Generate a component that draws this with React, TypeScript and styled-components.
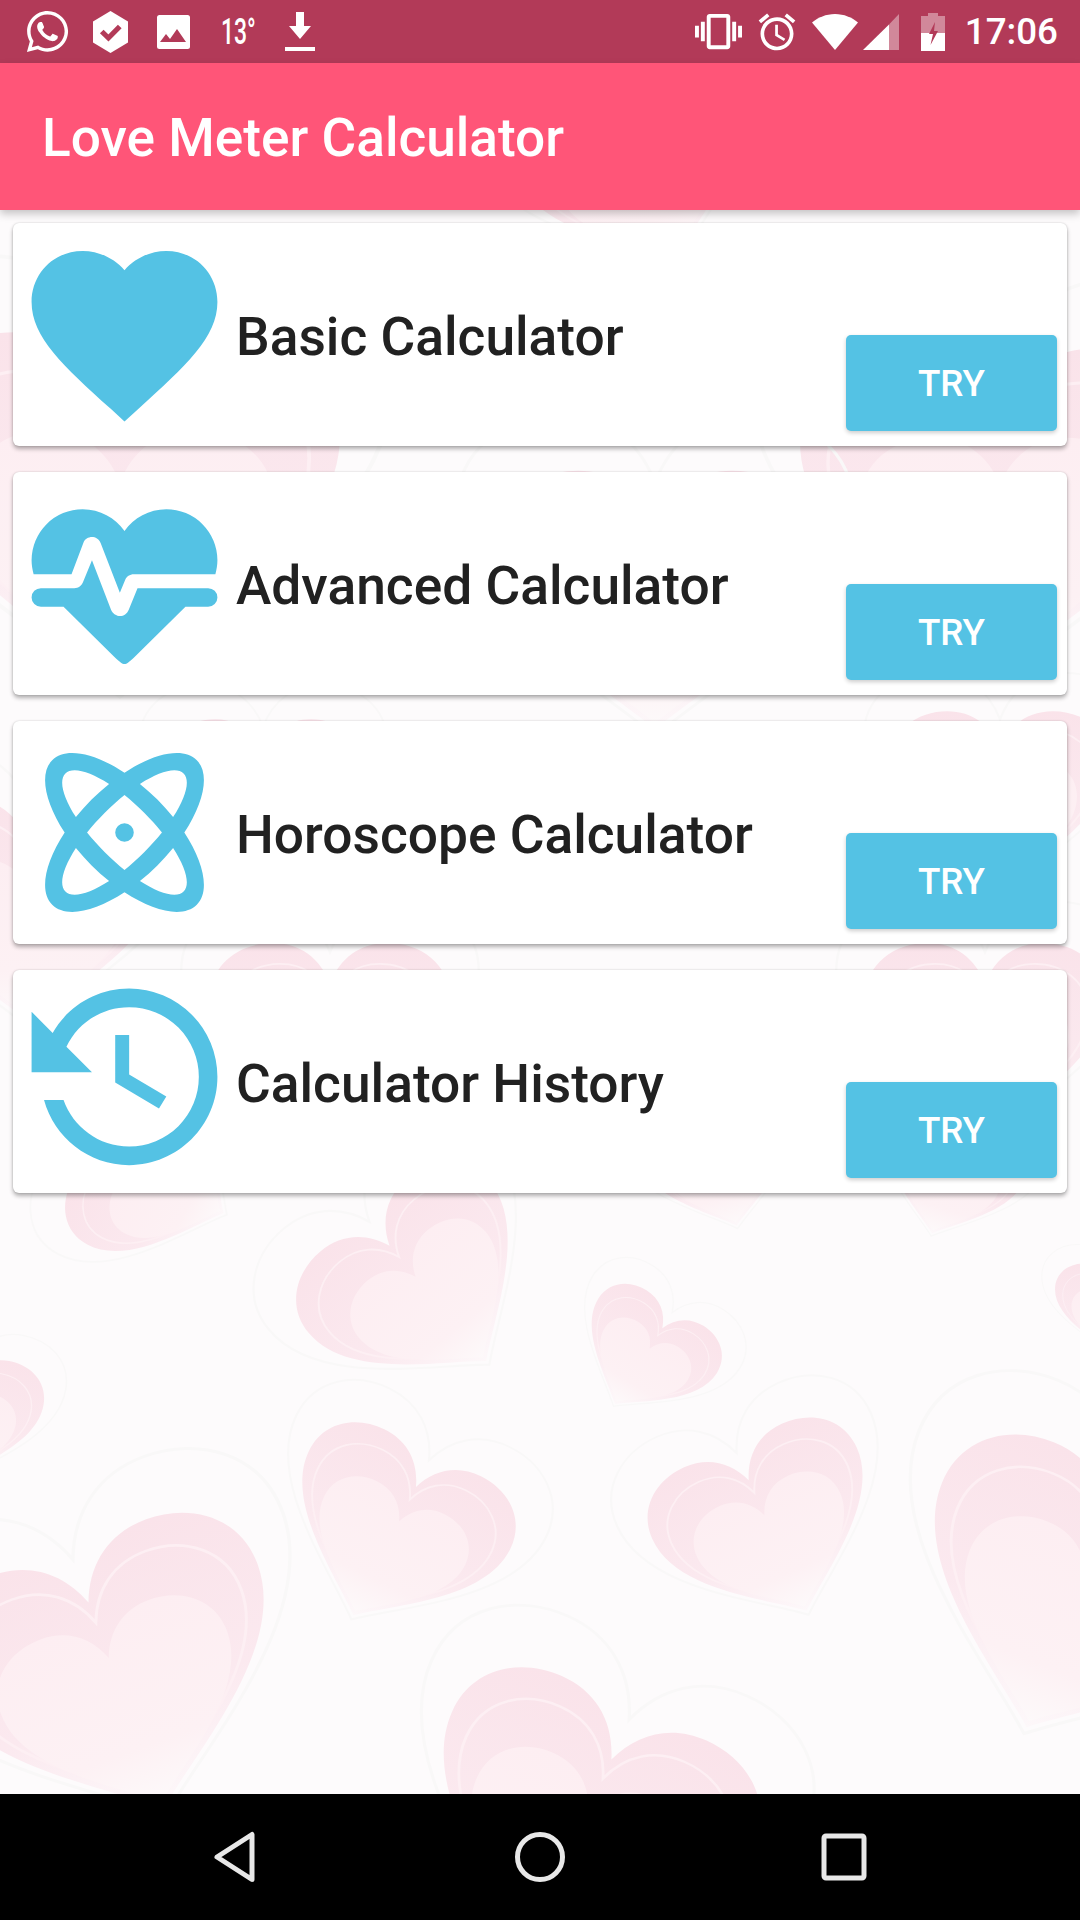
import React from 'react';
import styled, { createGlobalStyle } from 'styled-components';
import { FaWhatsapp } from 'react-icons/fa';

const GlobalStyle = createGlobalStyle`
  html, body {
    margin: 0;
    padding: 0;
    background: #000;
  }
  * {
    box-sizing: border-box;
  }
  body {
    font-family: Roboto, "Noto Sans", sans-serif;
  }
`;

const BLUE = '#54c2e4';

const HEART =
  'M0 95C-30 65-100 20-100-40C-100-75-75-95-48-95C-25-95-8-80 0-55C8-80 25-95 48-95C75-95 100-75 100-40C100 20 30 65 0 95Z';

// x, y = centre of the heart on the page body, s = scale, r = rotation in degrees
const hearts = [
  { x: 120, y: 300, s: 2.2, r: 0 },
  { x: 1000, y: 300, s: 2.0, r: 0 },
  { x: 640, y: -40, s: 1.2, r: -20 },
  { x: 655, y: 390, s: 1.6, r: 0 },
  { x: 263, y: 590, s: 1.0, r: 0 },
  { x: 1000, y: 590, s: 1.1, r: 0 },
  { x: 30, y: 700, s: 1.4, r: 0 },
  { x: 330, y: 830, s: 1.2, r: 0 },
  { x: 985, y: 830, s: 1.2, r: 0 },
  { x: 158, y: 968, s: 0.92, r: -62 },
  { x: 950, y: 968, s: 0.72, r: 18 },
  { x: 720, y: 953, s: 0.8, r: -15 },
  { x: 425, y: 1078, s: 1.18, r: -40 },
  { x: 645, y: 1146, s: 0.7, r: 32 },
  { x: 393, y: 1324, s: 1.12, r: 26 },
  { x: 770, y: 1318, s: 1.12, r: -24 },
  { x: 116, y: 1468, s: 1.72, r: -20 },
  { x: 580, y: 1620, s: 1.65, r: 24 },
  { x: 1078, y: 1390, s: 1.7, r: 22 },
  { x: -40, y: 1208, s: 0.8, r: 10 },
  { x: 1110, y: 1098, s: 0.55, r: 0 }
];

const menu = [
  {
    title: 'Basic Calculator',
    icon: 'M12 21.35l-1.45-1.32C5.4 15.36 2 12.28 2 8.5 2 5.42 4.42 3 7.5 3c1.74 0 3.41.81 4.5 2.09C13.09 3.81 14.76 3 16.5 3 19.58 3 22 5.42 22 8.5c0 3.78-3.4 6.86-8.55 11.54L12 21.35z'
  },
  {
    title: 'Advanced Calculator',
    icon: 'M7.5,4A5.5,5.5 0 0,0 2,9.5C2,10 2.09,10.5 2.22,11H6.3L7.57,7.63C7.87,6.83 9.05,6.75 9.43,7.63L11.5,13L12.09,11.58C12.22,11.25 12.57,11 13,11H21.78C21.91,10.5 22,10 22,9.5A5.5,5.5 0 0,0 16.5,4C14.64,4 13,4.93 12,6.34C11,4.93 9.36,4 7.5,4V4M3,12.5A1,1 0 0,0 2,13.5A1,1 0 0,0 3,14.5H5.44L11,20C12,20.9 12,20.9 13,20L18.56,14.5H21A1,1 0 0,0 22,13.5A1,1 0 0,0 21,12.5H13.4L12.47,14.8C12.07,15.81 10.92,15.67 10.55,14.83L8.5,9.5L7.54,11.83C7.39,12.21 7.05,12.5 6.6,12.5H3Z'
  },
  {
    title: 'Horoscope Calculator',
    icon: 'M12,11A1,1 0 0,1 13,12A1,1 0 0,1 12,13A1,1 0 0,1 11,12A1,1 0 0,1 12,11M4.22,4.22C5.65,2.79 8.75,3.43 12,5.56C15.25,3.43 18.35,2.79 19.78,4.22C21.21,5.65 20.57,8.75 18.44,12C20.57,15.25 21.21,18.35 19.78,19.78C18.35,21.21 15.25,20.57 12,18.44C8.75,20.57 5.65,21.21 4.22,19.78C2.79,18.35 3.43,15.25 5.56,12C3.43,8.75 2.79,5.65 4.22,4.22M15.54,8.46C16.15,9.08 16.71,9.71 17.23,10.34C18.61,8.21 19.11,6.38 18.36,5.64C17.62,4.89 15.79,5.39 13.66,6.77C14.29,7.29 14.92,7.85 15.54,8.46M8.46,15.54C7.85,14.92 7.29,14.29 6.77,13.66C5.39,15.79 4.89,17.62 5.64,18.36C6.38,19.11 8.21,18.61 10.34,17.23C9.71,16.71 9.08,16.15 8.46,15.54M5.64,5.64C4.89,6.38 5.39,8.21 6.77,10.34C7.29,9.71 7.85,9.08 8.46,8.46C9.08,7.85 9.71,7.29 10.34,6.77C8.21,5.39 6.38,4.89 5.64,5.64M9.88,14.12C10.58,14.82 11.3,15.46 12,16.03C12.7,15.46 13.42,14.82 14.12,14.12C14.82,13.42 15.46,12.7 16.03,12C15.46,11.3 14.82,10.58 14.12,9.88C13.42,9.18 12.7,8.54 12,7.97C11.3,8.54 10.58,9.18 9.88,9.88C9.18,10.58 8.54,11.3 7.97,12C8.54,12.7 9.18,13.42 9.88,14.12M18.36,18.36C19.11,17.62 18.61,15.79 17.23,13.66C16.71,14.29 16.15,14.92 15.54,15.54C14.92,16.15 14.29,16.71 13.66,17.23C15.79,18.61 17.62,19.11 18.36,18.36Z'
  },
  {
    title: 'Calculator History',
    icon: 'M11,7V12.11L15.71,14.9L16.5,13.62L12.5,11.25V7M12.5,2C8.97,2 5.91,3.92 4.27,6.77L2,4.5V11H8.5L5.75,8.25C6.96,5.73 9.5,4 12.5,4A7.5,7.5 0 0,1 20,11.5A7.5,7.5 0 0,1 12.5,19C9.23,19 6.47,16.91 5.44,14H3.34C4.44,18.03 8.11,21 12.5,21C17.74,21 22,16.75 22,11.5A9.5,9.5 0 0,0 12.5,2Z'
  }
];

const HeartsBackdrop = () => (
  <Backdrop viewBox="0 0 1080 1584">
    <defs>
      <linearGradient id="rim" x1="0" y1="0" x2="0" y2="1">
        <stop offset="0" stopColor="#fae3ea" />
        <stop offset="0.6" stopColor="#fbe9ef" />
        <stop offset="1" stopColor="#fdf8fa" />
      </linearGradient>
      <linearGradient id="core" x1="0" y1="0" x2="0" y2="1">
        <stop offset="0" stopColor="#fdeef2" />
        <stop offset="0.7" stopColor="#fdf1f4" />
        <stop offset="1" stopColor="#fdf9fa" />
      </linearGradient>
    </defs>
    {hearts.map((h, i) => (
      <g key={i} transform={`translate(${h.x} ${h.y}) rotate(${h.r}) scale(${h.s} ${h.s * 0.85})`}>
        <path d={HEART} transform="translate(0 -18) scale(1.24)" fill="none" stroke="#f9f8f8" strokeWidth="1.6" />
        <path d={HEART} fill="url(#rim)" />
        <path d={HEART} transform="translate(0 7) scale(0.86)" fill="none" stroke="#fdeff3" strokeWidth="2" />
        <path d={HEART} transform="translate(0 24) scale(0.7)" fill="url(#core)" />
      </g>
    ))}
  </Backdrop>
);

const App = () => (
  <Page>
    <GlobalStyle />
    <StatusBar>
      <StatusGroup>
        <FaWhatsapp size={47} color="#fff" />
        <StatusSvg $ml={22} width={35} height={42} viewBox="0 0 34 42" preserveAspectRatio="none">
          <path d="M17 0L34 10.5V31.5L17 42L0 31.5V10.5Z" fill="#fff" />
          <path d="M8.5 20.5L15 27L26 15.5" fill="none" stroke="#b23a58" strokeWidth="5" />
        </StatusSvg>
        <StatusSvg $ml={22} width={46} height={36} viewBox="0 0 46 36">
          <rect x="7" y="1" width="33" height="34" rx="2.5" fill="#fff" />
          <path d="M10 28L16 20L20 25L27 15L36 28Z" fill="#b23a58" />
        </StatusSvg>
        <Temperature>13°</Temperature>
        <StatusSvg $ml={21} width={44} height={42} viewBox="0 0 44 42">
          <path d="M18 1H26V15H33L22 28L11 15H18Z" fill="#fff" />
          <rect x="7" y="36" width="30" height="4" fill="#fff" />
        </StatusSvg>
      </StatusGroup>
      <StatusGroup>
        <StatusSvg width={47} height={47} viewBox="0 0 24 24">
          <path
            fill="#fff"
            d="M0 15h2V9H0v6zm3 2h2V7H3v10zm19-8v6h2V9h-2zm-3 8h2V7h-2v10zM16.5 3h-9C6.67 3 6 3.67 6 4.5v15c0 .83.67 1.5 1.5 1.5h9c.83 0 1.5-.67 1.5-1.5v-15c0-.83-.67-1.5-1.5-1.5zM16 19H8V5h8v14z"
          />
        </StatusSvg>
        <StatusSvg $ml={13} width={44} height={44} viewBox="0 0 24 24">
          <path
            fill="#fff"
            d="M22 5.72l-4.6-3.86-1.29 1.53 4.6 3.86L22 5.72zM7.88 3.39L6.6 1.86 2 5.71l1.29 1.53 4.59-3.85zM12.5 8H11v6l4.75 2.85.75-1.23-4-2.37V8zM12 4c-4.97 0-9 4.03-9 9s4.02 9 9 9c4.97 0 9-4.03 9-9s-4.03-9-9-9zm0 16c-3.87 0-7-3.13-7-7s3.13-7 7-7 7 3.13 7 7-3.13 7-7 7z"
          />
        </StatusSvg>
        <StatusSvg $ml={13} width={46} height={36} viewBox="0 0 46 36">
          <path d="M23 36L0 8.5C6 3.5 14 0 23 0S40 3.5 46 8.5Z" fill="#fff" />
        </StatusSvg>
        <StatusSvg $ml={5} width={36} height={36} viewBox="0 0 36 36">
          <path d="M26 10.5L36 0V36H26Z" fill="#fff" fillOpacity="0.4" />
          <path d="M0 36L26 10.5V36Z" fill="#fff" />
        </StatusSvg>
        <StatusSvg $ml={22} width={24} height={38} viewBox="0 0 24 38">
          <path d="M7 0H17V3H24V38H0V3H7Z" fill="#fff" fillOpacity="0.4" />
          <path d="M0 20H24V38H0Z" fill="#fff" />
          <path d="M14 9L8 21H12L9.5 32L17 18H13Z" fill="#b23a58" />
        </StatusSvg>
        <Clock>17:06</Clock>
      </StatusGroup>
    </StatusBar>
    <AppBar>
      <AppTitle>Love Meter Calculator</AppTitle>
    </AppBar>
    <Body>
      <HeartsBackdrop />
      {menu.map((item) => (
        <Card key={item.title}>
          <CardIcon viewBox="0 0 24 24">
            <path d={item.icon} />
          </CardIcon>
          <CardTitle>{item.title}</CardTitle>
          <TryButton>TRY</TryButton>
        </Card>
      ))}
    </Body>
    <NavBar>
      <NavSvg width={44} height={52} viewBox="0 0 44 52">
        <path d="M39 3.5V48.5L4 26Z" />
      </NavSvg>
      <NavSvg width={54} height={52} viewBox="0 0 54 52">
        <circle cx="28" cy="26" r="22.5" />
      </NavSvg>
      <NavSvg width={46} height={48} viewBox="0 0 46 48">
        <rect x="3" y="3" width="40" height="42" rx="2" />
      </NavSvg>
    </NavBar>
  </Page>
);

const Page = styled.div`
  display: flex;
  flex-direction: column;
  width: 1080px;
  height: 1920px;
  overflow: hidden;
`;

const StatusBar = styled.div`
  display: flex;
  justify-content: space-between;
  align-items: center;
  flex: 0 0 63px;
  padding: 0 22px 0 24px;
  background: #b23a58;
`;

const StatusGroup = styled.div`
  display: flex;
  align-items: center;
`;

const StatusSvg = styled.svg<{ $ml?: number }>`
  display: block;
  flex: none;
  margin-left: ${(p) => p.$ml || 0}px;
`;

const Temperature = styled.span`
  width: 36px;
  margin-left: 25px;
  color: #fff;
  font-size: 37px;
  font-weight: 500;
  line-height: 42px;
  white-space: nowrap;
  transform: scaleX(0.62);
  transform-origin: left center;
`;

const Clock = styled.span`
  margin-left: 20px;
  color: #fff;
  font-size: 36.75px;
  font-weight: 500;
  line-height: 42px;
`;

const AppBar = styled.header`
  position: relative;
  z-index: 2;
  display: flex;
  align-items: center;
  flex: 0 0 147px;
  padding: 2px 42px 0;
  background: #ff5578;
  box-shadow: 0 4px 8px rgba(0, 0, 0, 0.22);
`;

const AppTitle = styled.h1`
  margin: 0;
  color: #fff;
  font-size: 53.2px;
  font-weight: 500;
  line-height: 62px;
`;

const Body = styled.main`
  position: relative;
  display: flex;
  flex-direction: column;
  flex: 1;
  gap: 26px;
  padding: 13px 13px 0;
  background: #fdfbfc;
  overflow: hidden;
`;

const Backdrop = styled.svg`
  position: absolute;
  top: 0;
  left: 0;
  width: 1080px;
  height: 1584px;
`;

const Card = styled.section`
  position: relative;
  display: flex;
  align-items: center;
  flex: 0 0 223px;
  background: #fff;
  border-radius: 6px;
  box-shadow: 0 3px 4px rgba(0, 0, 0, 0.3), 0 0 2px rgba(0, 0, 0, 0.18);
`;

const CardIcon = styled.svg`
  display: block;
  flex: 0 0 223px;
  width: 223px;
  height: 223px;
  fill: ${BLUE};
`;

const CardTitle = styled.h2`
  flex: 1;
  margin: 0;
  padding-top: 4px;
  color: #212121;
  font-size: 53.3px;
  font-weight: 500;
  line-height: 62px;
`;

const TryButton = styled.button`
  align-self: flex-end;
  width: 211px;
  height: 96px;
  margin: 0 10px 15px 0;
  padding: 0;
  border: 0;
  border-radius: 5px;
  background: ${BLUE};
  box-shadow: 0 2px 4px rgba(0, 0, 0, 0.2);
  color: #fff;
  font-family: inherit;
  font-size: 36.75px;
  font-weight: 500;
`;

const NavBar = styled.nav`
  display: flex;
  justify-content: center;
  align-items: center;
  flex: 0 0 126px;
  gap: 255px;
  background: #000;
`;

const NavSvg = styled.svg`
  display: block;
  fill: none;
  stroke: #e8e8e8;
  stroke-width: 5;
  stroke-linejoin: round;
`;

export default App;
